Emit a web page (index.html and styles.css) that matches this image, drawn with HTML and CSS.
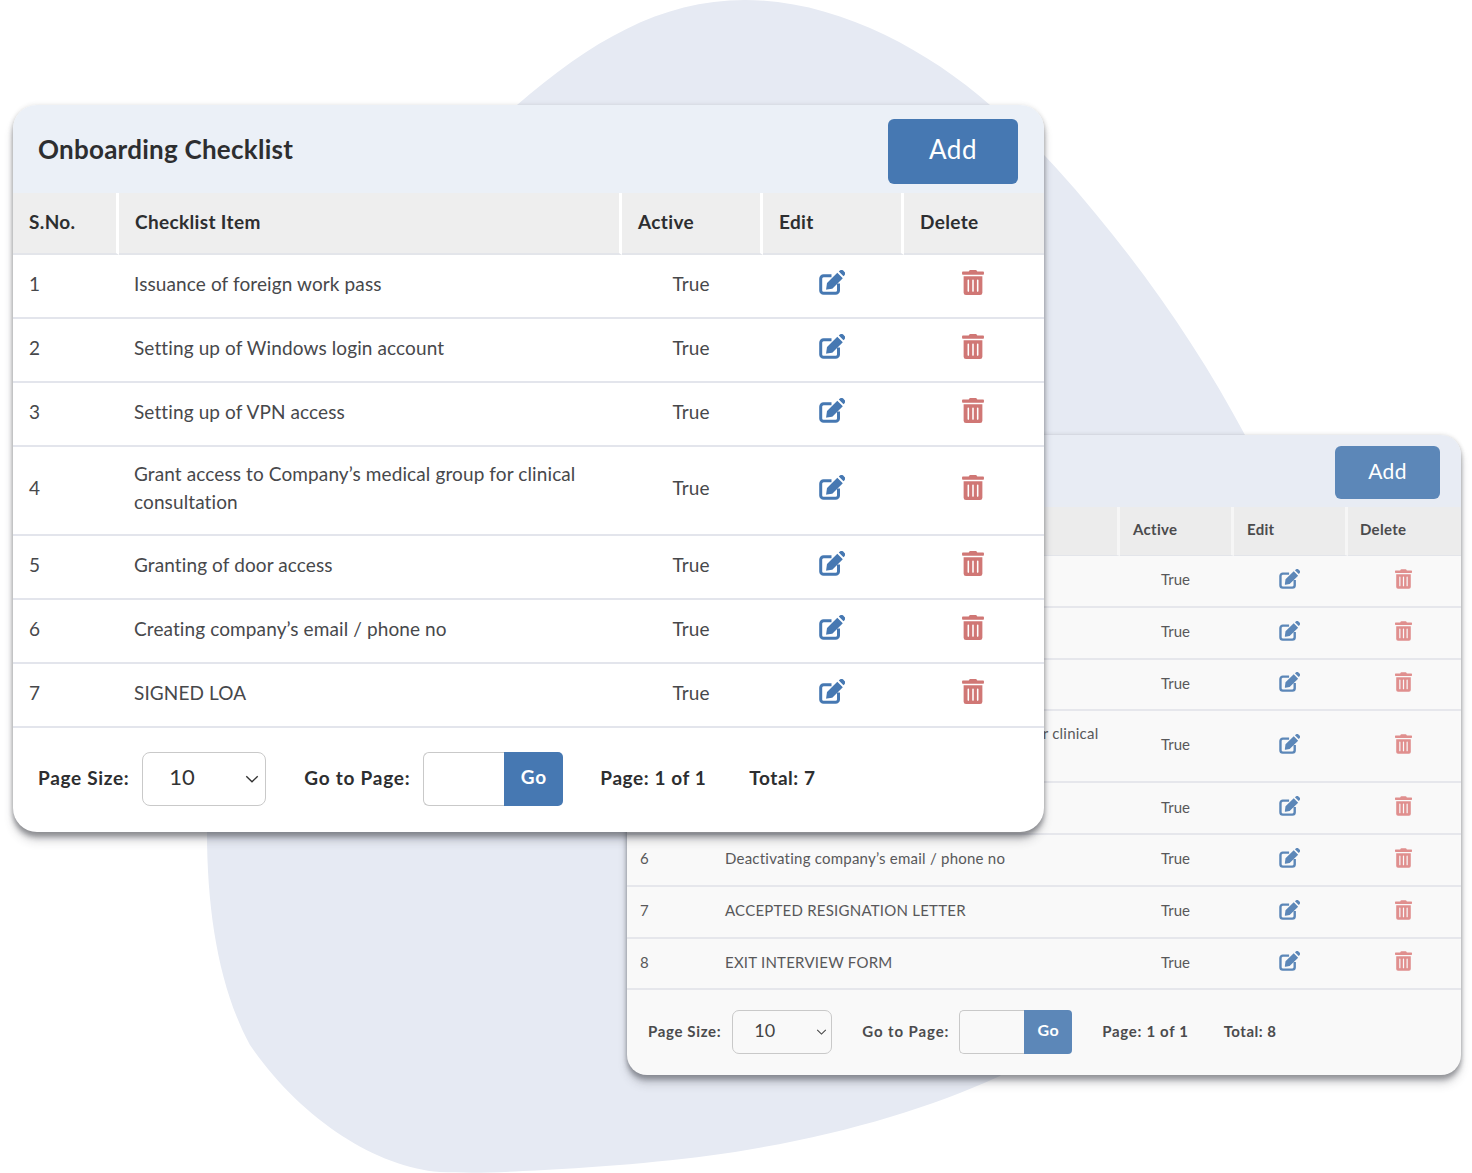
FILE: index.html
```html
<!DOCTYPE html>
<html lang="en">
<head>
<meta charset="utf-8">
<title>Onboarding Checklist</title>
<link rel="stylesheet" href="styles.css">
</head>
<body>
<svg class="defs" width="0" height="0" aria-hidden="true">
  <symbol id="i-edit" viewBox="0 0 26 25">
    <path d="M12.5 5.800H4.600A2.900 2.900 0 0 0 1.700 8.700V20.400a2.900 2.900 0 0 0 2.900 2.900H16.600a2.900 2.900 0 0 0 2.900-2.900V13.600" fill="none" stroke="currentColor" stroke-width="3"/>
    <path d="M7.200 18.700 8 12.900 18.300 2.800 23.800 8.300 13.500 18.500a1 1 0 0 1-.5.3L8 19.600a.7.7 0 0 1-.8-.9Z" fill="currentColor"/>
    <path d="M19.800 1.600 20.900.6a2.400 2.400 0 0 1 3.300 0l1.300 1.300a2.400 2.400 0 0 1 0 3.300L24.500 6.300Z" fill="currentColor"/>
  </symbol>
  <symbol id="i-trash" viewBox="0 0 448 512">
    <path d="M32 464a48 48 0 0 0 48 48h288a48 48 0 0 0 48-48V128H32zm272-256a16 16 0 0 1 32 0v224a16 16 0 0 1-32 0zm-96 0a16 16 0 0 1 32 0v224a16 16 0 0 1-32 0zm-96 0a16 16 0 0 1 32 0v224a16 16 0 0 1-32 0zM432 32H312l-9.400-18.700A24 24 0 0 0 281.100 0H166.800a23.720 23.720 0 0 0-21.400 13.300L136 32H16A16 16 0 0 0 0 48v32a16 16 0 0 0 16 16h416a16 16 0 0 0 16-16V48a16 16 0 0 0-16-16z" fill="currentColor"/>
  </symbol>
</svg>

<main class="canvas">
  <svg class="blob" viewBox="0 0 1472 1173" aria-hidden="true">
    <path d="M517 105C590 42 660 0 745 0C835 0 925 48 990 105C1020 128 1060 170 1095 213C1155 285 1205 360 1245 435L1245 700L1000 1076C925 1110 840 1135 735 1152C670 1162 590 1168 523 1171C490 1173 465 1173 440 1172C375 1167 300 1118 250 1045C220 990 207 915 207 832Z"/>
  </svg>

  <section class="card card-back">
    <header class="card-head">
      <button class="add-btn">Add</button>
    </header>
    <table class="grid">
      <colgroup><col class="c-no"><col class="c-item"><col class="c-flag"><col class="c-flag"><col class="c-del"></colgroup>
      <thead>
        <tr><th>S.No.</th><th>Checklist Item</th><th>Active</th><th>Edit</th><th>Delete</th></tr>
      </thead>
      <tbody>
        <tr><td>1</td><td>Cancellation of foreign work pass</td><td class="mid">True</td><td class="mid ic"><svg class="ico-edit"><use href="#i-edit"/></svg></td><td class="mid ic"><svg class="ico-trash"><use href="#i-trash"/></svg></td></tr>
        <tr><td>2</td><td>Removal of Windows login account</td><td class="mid">True</td><td class="mid ic"><svg class="ico-edit"><use href="#i-edit"/></svg></td><td class="mid ic"><svg class="ico-trash"><use href="#i-trash"/></svg></td></tr>
        <tr><td>3</td><td>Removal of VPN access</td><td class="mid">True</td><td class="mid ic"><svg class="ico-edit"><use href="#i-edit"/></svg></td><td class="mid ic"><svg class="ico-trash"><use href="#i-trash"/></svg></td></tr>
        <tr class="tall"><td>4</td><td>Revoke access to Company’s medical groups for clinical consultation</td><td class="mid">True</td><td class="mid ic"><svg class="ico-edit"><use href="#i-edit"/></svg></td><td class="mid ic"><svg class="ico-trash"><use href="#i-trash"/></svg></td></tr>
        <tr><td>5</td><td>Removal of door access</td><td class="mid">True</td><td class="mid ic"><svg class="ico-edit"><use href="#i-edit"/></svg></td><td class="mid ic"><svg class="ico-trash"><use href="#i-trash"/></svg></td></tr>
        <tr><td>6</td><td>Deactivating company’s email / phone no</td><td class="mid">True</td><td class="mid ic"><svg class="ico-edit"><use href="#i-edit"/></svg></td><td class="mid ic"><svg class="ico-trash"><use href="#i-trash"/></svg></td></tr>
        <tr><td>7</td><td>ACCEPTED RESIGNATION LETTER</td><td class="mid">True</td><td class="mid ic"><svg class="ico-edit"><use href="#i-edit"/></svg></td><td class="mid ic"><svg class="ico-trash"><use href="#i-trash"/></svg></td></tr>
        <tr><td>8</td><td>EXIT INTERVIEW FORM</td><td class="mid">True</td><td class="mid ic"><svg class="ico-edit"><use href="#i-edit"/></svg></td><td class="mid ic"><svg class="ico-trash"><use href="#i-trash"/></svg></td></tr>
      </tbody>
    </table>
    <footer class="pager">
      <span class="lbl lbl-size">Page Size:</span>
      <span class="select"><span>10</span><svg class="chev" viewBox="0 0 12 7"><path d="M1 1l5 5 5-5" fill="none" stroke="currentColor" stroke-width="1.2"/></svg></span>
      <span class="lbl lbl-go">Go to Page:</span>
      <span class="go-group"><span class="go-input"></span><span class="go-btn">Go</span></span>
      <span class="lbl lbl-page">Page: 1 of 1</span>
      <span class="lbl lbl-total">Total: 8</span>
    </footer>
  </section>

  <section class="card card-front">
    <header class="card-head">
      <h2 class="card-title">Onboarding Checklist</h2>
      <button class="add-btn">Add</button>
    </header>
    <table class="grid">
      <colgroup><col class="c-no"><col class="c-item"><col class="c-flag"><col class="c-flag"><col class="c-del"></colgroup>
      <thead>
        <tr><th>S.No.</th><th>Checklist Item</th><th>Active</th><th>Edit</th><th>Delete</th></tr>
      </thead>
      <tbody>
        <tr><td>1</td><td>Issuance of foreign work pass</td><td class="mid">True</td><td class="mid ic"><svg class="ico-edit"><use href="#i-edit"/></svg></td><td class="mid ic"><svg class="ico-trash"><use href="#i-trash"/></svg></td></tr>
        <tr><td>2</td><td>Setting up of Windows login account</td><td class="mid">True</td><td class="mid ic"><svg class="ico-edit"><use href="#i-edit"/></svg></td><td class="mid ic"><svg class="ico-trash"><use href="#i-trash"/></svg></td></tr>
        <tr><td>3</td><td>Setting up of VPN access</td><td class="mid">True</td><td class="mid ic"><svg class="ico-edit"><use href="#i-edit"/></svg></td><td class="mid ic"><svg class="ico-trash"><use href="#i-trash"/></svg></td></tr>
        <tr class="tall"><td>4</td><td>Grant access to Company’s medical group for clinical consultation</td><td class="mid">True</td><td class="mid ic"><svg class="ico-edit"><use href="#i-edit"/></svg></td><td class="mid ic"><svg class="ico-trash"><use href="#i-trash"/></svg></td></tr>
        <tr><td>5</td><td>Granting of door access</td><td class="mid">True</td><td class="mid ic"><svg class="ico-edit"><use href="#i-edit"/></svg></td><td class="mid ic"><svg class="ico-trash"><use href="#i-trash"/></svg></td></tr>
        <tr><td>6</td><td>Creating company’s email / phone no</td><td class="mid">True</td><td class="mid ic"><svg class="ico-edit"><use href="#i-edit"/></svg></td><td class="mid ic"><svg class="ico-trash"><use href="#i-trash"/></svg></td></tr>
        <tr><td>7</td><td>SIGNED LOA</td><td class="mid">True</td><td class="mid ic"><svg class="ico-edit"><use href="#i-edit"/></svg></td><td class="mid ic"><svg class="ico-trash"><use href="#i-trash"/></svg></td></tr>
      </tbody>
    </table>
    <footer class="pager">
      <span class="lbl lbl-size">Page Size:</span>
      <span class="select"><span>10</span><svg class="chev" viewBox="0 0 12 7"><path d="M1 1l5 5 5-5" fill="none" stroke="currentColor" stroke-width="1.2"/></svg></span>
      <span class="lbl lbl-go">Go to Page:</span>
      <span class="go-group"><span class="go-input"></span><span class="go-btn">Go</span></span>
      <span class="lbl lbl-page">Page: 1 of 1</span>
      <span class="lbl lbl-total">Total: 7</span>
    </footer>
  </section>
</main>
</body>
</html>
```
FILE: styles.css
```css
* { box-sizing: border-box; }
html, body { margin: 0; padding: 0; background: #fff; }
body { font-family: Lato, "Open Sans", sans-serif; }
.defs { position: absolute; }
.canvas { position: relative; width: 1472px; height: 1173px; overflow: hidden; }
.blob { position: absolute; inset: 0; width: 1472px; height: 1173px; }
.blob path { fill: #e6eaf3; }

.card { position: absolute; display: flex; flex-direction: column; overflow: hidden; }
.card-head { display: flex; align-items: center; justify-content: space-between; }
.card-title { margin: 0; font-weight: 700; }
.add-btn { border: 0; color: #fff; font-family: inherit; font-weight: 400; }
.grid { width: 100%; border-collapse: separate; border-spacing: 0; table-layout: fixed; }
.grid th { text-align: left; font-weight: 700; }
.grid th:not(:last-child) { border-right-style: solid; border-right-color: #fff; }
.grid td { vertical-align: middle; }
.grid .mid { text-align: center; }
.grid svg { display: block; margin: 0 auto; }
.pager { display: flex; align-items: center; flex: 1; }
.lbl { font-weight: 700; white-space: nowrap; }
.select { display: flex; align-items: center; justify-content: space-between; background: #fff; border: 1.5px solid #c9c9c9; }
.go-group { display: flex; align-items: stretch; }
.go-input { display: block; background: #fff; border: 1.5px solid #c9c9c9; border-right: 0; }
.go-btn { display: flex; align-items: center; justify-content: center; color: #fff; font-weight: 700; }

/* front card */
.card-front {
  left: 13px; top: 105px; width: 1031px; height: 727px;
  border-radius: 24px; background: #fff; color: #2d2e30;
  box-shadow: 0 5px 5px rgba(55, 57, 65, .42), 0 9px 10px rgba(55, 57, 65, .2), 0 0 5px rgba(60, 60, 60, .14);
}
.card-front .card-head { height: 88px; padding: 0 26px 0 25px; background: #ebf0f7; }
.card-front .card-title { font-size: 26px; letter-spacing: .25px; }
.card-front .add-btn { width: 130px; height: 65px; margin-top: 4px; padding: 0 0 4px; border-radius: 6px; background: #4678b2; font-size: 26px; letter-spacing: .5px; }
.card-front .c-no { width: 106px; }
.card-front .c-item { width: 503px; }
.card-front .c-flag { width: 141px; }
.card-front th { height: 62px; padding: 0 0 3px 16px; background: #eee; font-size: 19px; letter-spacing: .35px; border-bottom: 2px solid #e3e5ea; }
.card-front th:not(:last-child) { border-right-width: 3px; }
.card-front td { height: 64px; padding: 0 16px 4px 15px; font-size: 19px; letter-spacing: .11px; line-height: 28px; color: #47484b; border-bottom: 2px solid #e3e5ec; }
.card-front td:first-child { padding-left: 16px; }
.card-front tr.tall td { height: 89px; padding-bottom: 6px; }
.card-front td.mid { padding-left: 0; padding-right: 3px; }
.card-front td.ic { padding-bottom: 7px; }
.card-front td:nth-child(2) { padding-right: 30px; }
.card-front .ico-edit { width: 26px; height: 25px; color: #4678b2; }
.card-front .ico-trash { width: 22px; height: 25px; color: #d07775; }
.card-front .pager { padding-left: 25px; padding-bottom: 2px; }
.card-front .lbl { font-size: 19px; letter-spacing: .68px; margin-bottom: 3px; }
.card-front .select { width: 124px; height: 54px; margin-left: 13px; padding: 0 6px 5px 26px; border-radius: 8px; font-size: 22px; font-weight: 400; color: #333; }
.card-front .chev { width: 14px; height: 8px; color: #333; margin-top: 5px; }
.card-front .lbl-go { margin-left: 38px; letter-spacing: .75px; }
.card-front .go-group { height: 54px; margin-left: 13px; }
.card-front .go-input { width: 81px; border-radius: 6px 0 0 6px; }
.card-front .go-btn { width: 59px; background: #4678b2; border-radius: 0 5px 5px 0; font-size: 19px; letter-spacing: .7px; padding-bottom: 5px; }
.card-front .lbl-page { margin-left: 37px; letter-spacing: .58px; }
.card-front .lbl-total { margin-left: 43px; letter-spacing: .55px; }

/* back card */
.card-back {
  left: 627px; top: 435px; width: 834px; height: 640px;
  border-radius: 20px; background: #f9f9f9; color: #4b4b4d;
  box-shadow: 0 5px 5px rgba(55, 57, 65, .38), 0 9px 10px rgba(55, 57, 65, .18), 0 0 4px rgba(60, 60, 60, .2);
}
.card-back .card-head { height: 72px; padding: 0 21px; background: #e8ecf4; justify-content: flex-end; }
.card-back .add-btn { width: 105px; height: 53px; margin-top: 2px; padding: 0 0 4px; border-radius: 6px; background: #5c87b8; font-size: 21px; letter-spacing: .4px; }
.card-back .c-no { width: 85px; }
.card-back .c-item { width: 408px; }
.card-back .c-flag { width: 114px; }
.card-back th { height: 49px; padding: 0 0 5px 13px; background: #ececec; font-size: 15px; letter-spacing: .3px; border-bottom: 1px solid #e3e5ea; }
.card-back th:last-child { padding-left: 12px; }
.card-back th:not(:last-child) { border-right-width: 3px; border-right-color: #f6f6f6; }
.card-back td { height: 51.750px; padding: 0 13px 3px; font-size: 15px; letter-spacing: .23px; line-height: 22px; color: #58585a; border-bottom: 2px solid #e6e7ec; }
.card-back tr.tall td { height: 72px; padding-bottom: 4px; }
.card-back td.mid { padding-left: 0; padding-right: 3px; letter-spacing: 0; }
.card-back td.ic { padding-bottom: 4px; }
.card-back td:nth-child(2) { padding-right: 8px; }
.card-back .ico-edit { width: 21px; height: 20px; color: #5c87b8; }
.card-back .ico-trash { width: 17px; height: 20px; color: #e08f8e; }
.card-back .pager { padding-left: 21px; padding-bottom: 2px; }
.card-back .lbl { font-size: 15px; letter-spacing: .65px; margin-bottom: 2px; }
.card-back .select { width: 100px; height: 44px; margin-left: 11px; padding: 0 4px 4px 21px; border-radius: 7px; font-size: 18px; font-weight: 400; color: #444; background: #f9f9f9; }
.card-back .chev { width: 11px; height: 6px; color: #444; margin-top: 4px; }
.card-back .lbl-go { margin-left: 30px; letter-spacing: .9px; }
.card-back .go-group { height: 44px; margin-left: 10px; }
.card-back .go-input { width: 65px; border-radius: 5px 0 0 5px; background: #f9f9f9; }
.card-back .go-btn { width: 48px; background: #5c87b8; border-radius: 0 4px 4px 0; font-size: 16px; letter-spacing: .4px; padding-bottom: 5px; }
.card-back .lbl-page { margin-left: 30px; letter-spacing: .68px; }
.card-back .lbl-total { margin-left: 35px; letter-spacing: .5px; }
```
